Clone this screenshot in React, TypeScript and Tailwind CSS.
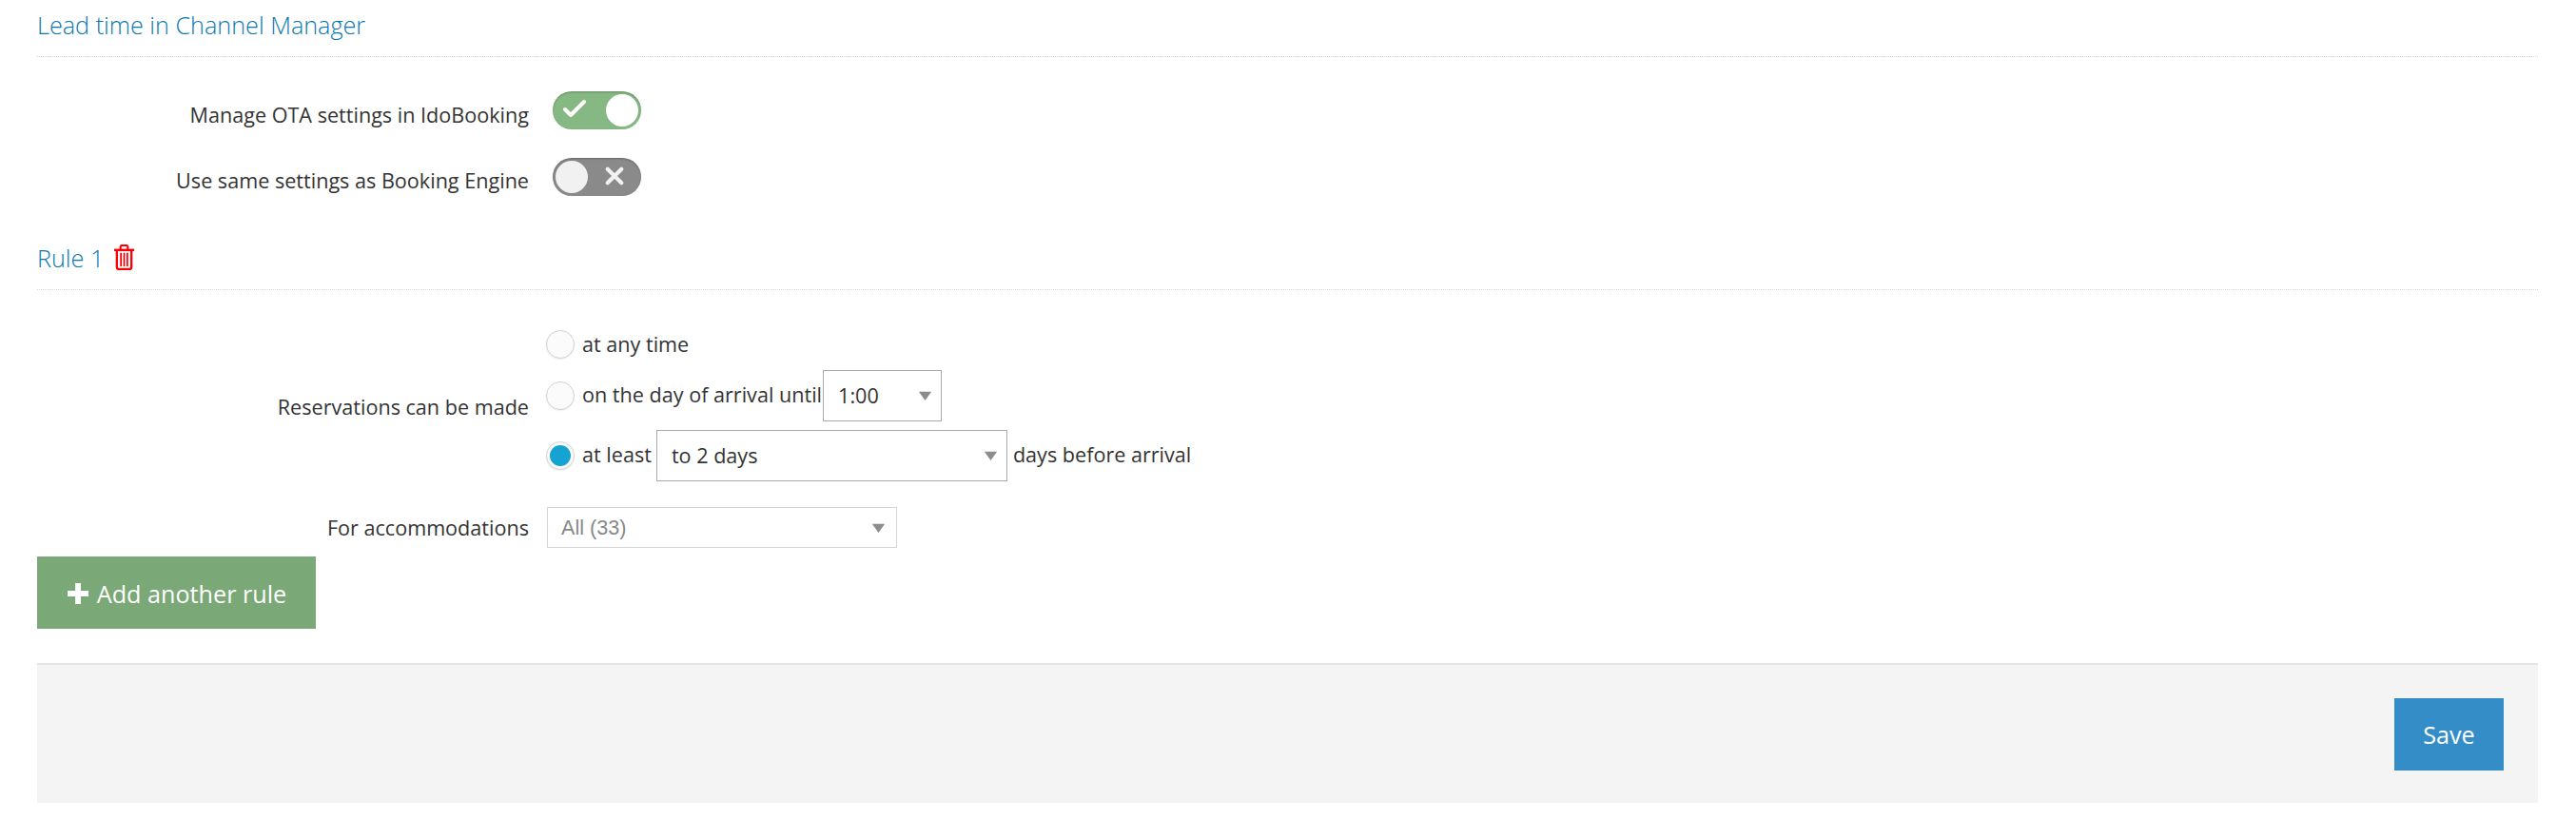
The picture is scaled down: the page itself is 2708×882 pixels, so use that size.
const font = "font-['Open_Sans',sans-serif]";

function Toggle({ on }: { on: boolean }) {
  return (
    <div
      className={`relative h-[40px] w-[93px] rounded-full ${on ? "bg-[#86b883]" : "bg-[#8a8a8a]"} shadow-[inset_0_1px_2px_rgba(0,0,0,0.25)]`}
    >
      {on ? (
        <svg viewBox="0 0 28 24" className="absolute left-[8px] top-[6px] h-[24px] w-[30px]">
          <path d="M4 13l6 6L24 5" fill="none" stroke="#fff" strokeWidth="4" strokeLinecap="round" strokeLinejoin="round" />
        </svg>
      ) : (
        <svg viewBox="0 0 24 24" className="absolute left-[54px] top-[8px] h-[22px] w-[22px]">
          <path d="M4 4l16 16M20 4L4 20" fill="none" stroke="#f2f2f2" strokeWidth="4.5" strokeLinecap="round" />
        </svg>
      )}
      <div
        className={`absolute top-[3px] h-[34px] w-[34px] rounded-full ${on ? "left-[56px] bg-white" : "left-[3px] bg-[#f1f1f1]"}`}
      />
    </div>
  );
}

function Radio({ checked }: { checked?: boolean }) {
  return (
    <span className="mr-[8px] flex h-[30px] w-[30px] shrink-0 items-center justify-center rounded-full border border-[#cfd4d8] bg-[#fbfbfb] shadow-[0_1px_2px_rgba(0,0,0,0.08)]">
      {checked && <span className="h-[22px] w-[22px] rounded-full bg-[#17a3d1]" />}
    </span>
  );
}

function Caret({ color = "#8c8c8c" }: { color?: string }) {
  return (
    <svg viewBox="0 0 16 12" className="h-[10px] w-[15px] shrink-0">
      <path d="M0 1h16L8 12z" fill={color} />
    </svg>
  );
}

function Select({ value, className }: { value: string; className: string }) {
  return (
    <div className={`flex h-[54px] items-center justify-between border border-[#aaaaaa] bg-white pl-[15px] ${className}`}>
      <span>{value}</span>
      <Caret />
    </div>
  );
}

function Row({ label, children, className, labelClass }: { label: string; children: React.ReactNode; className: string; labelClass?: string }) {
  return (
    <div className={`flex items-center ${className}`}>
      <label className={`w-[517px] shrink-0 text-right ${labelClass ?? ""}`}>{label}</label>
      {children}
    </div>
  );
}

export default function App() {
  return (
    <div className={`${font} h-[882px] bg-white pl-[39px] pr-[40px] text-[21.6px] leading-[28px] text-[#333333]`}>
      <h3 className="h-[60px] border-b border-dotted border-[#d8d8d8] pt-[7px] text-[25.2px] leading-[38px] font-light text-[#0a78b0]">
        Lead time in Channel Manager
      </h3>

      <Row label="Manage OTA settings in IdoBooking" className="mt-[36px] h-[40px] gap-[25px]" labelClass="pt-[9px]">
        <Toggle on />
      </Row>
      <Row label="Use same settings as Booking Engine" className="mt-[30px] h-[40px] gap-[25px]" labelClass="pt-[8px]">
        <Toggle on={false} />
      </Row>

      <h3 className="mt-[45px] flex h-[54px] items-center gap-[10px] border-b border-dotted border-[#d8d8d8] pb-[14px] text-[25.2px] font-light text-[#0a78b0]">
        Rule 1
        <svg viewBox="0 0 24 28" className="h-[27px] w-[23px]">
          <g fill="none" stroke="#fb0007">
            <path d="M1 6h22" strokeWidth="2.6" />
            <path d="M8 5V2.5A1.5 1.5 0 0 1 9.5 1h5A1.5 1.5 0 0 1 16 2.5V5" strokeWidth="2.2" />
            <path d="M4 7v18a2 2 0 0 0 2 2h12a2 2 0 0 0 2-2V7" strokeWidth="2.4" />
            <path d="M8.5 9v15M12 9v15M15.5 9v15" strokeWidth="1.8" />
          </g>
        </svg>
      </h3>

      <Row label="Reservations can be made" className="mt-[42px] gap-[18px]" labelClass="pt-[2px]">
        <div className="flex flex-col">
          <div className="flex h-[30px] items-center">
            <Radio />
            at any time
          </div>
          <div className="mt-[12px] flex h-[54px] items-center">
            <Radio />
            <span className="-mt-[2px] whitespace-nowrap">on the day of arrival until</span>
            <Select value="1:00" className="ml-[1px] w-[125px] pr-[9px]" />
          </div>
          <div className="mt-[9px] flex h-[54px] items-center">
            <Radio checked />
            <span className="-mt-[2px]">at least</span>
            <Select value="to 2 days" className="ml-[5px] w-[369px] pr-[9px]" />
            <span className="-mt-[2px] ml-[6px] whitespace-nowrap">days before arrival</span>
          </div>
        </div>
      </Row>

      <Row label="For accommodations" className="mt-[27px] gap-[19px]">
        <div className="flex h-[43px] w-[368px] items-center justify-between border border-[#d5d5d5] bg-white pr-[11px] pl-[14px] font-['Liberation_Sans',sans-serif] text-[#888888]">
          <span>All (33)</span>
          <Caret color="#8c8c8c" />
        </div>
      </Row>

      <button
        type="button"
        className="mt-[9px] flex h-[76px] w-[293px] items-center justify-center gap-[8px] bg-[#7aa876] pt-[1px] text-[25.2px] text-white"
      >
        <svg viewBox="0 0 24 24" className="h-[24px] w-[24px]">
          <path d="M9 1h6v8h8v6h-8v8H9v-8H1V9h8z" fill="#fff" />
        </svg>
        Add another rule
      </button>

      <div className="mt-[36px] flex h-[147px] items-center justify-end border-t-2 border-[#e5e5e5] bg-[#f4f4f4] pr-[36px]">
        <button type="button" className="h-[76px] w-[115px] bg-[#358dc8] text-[25.2px] text-white">
          Save
        </button>
      </div>
    </div>
  );
}
